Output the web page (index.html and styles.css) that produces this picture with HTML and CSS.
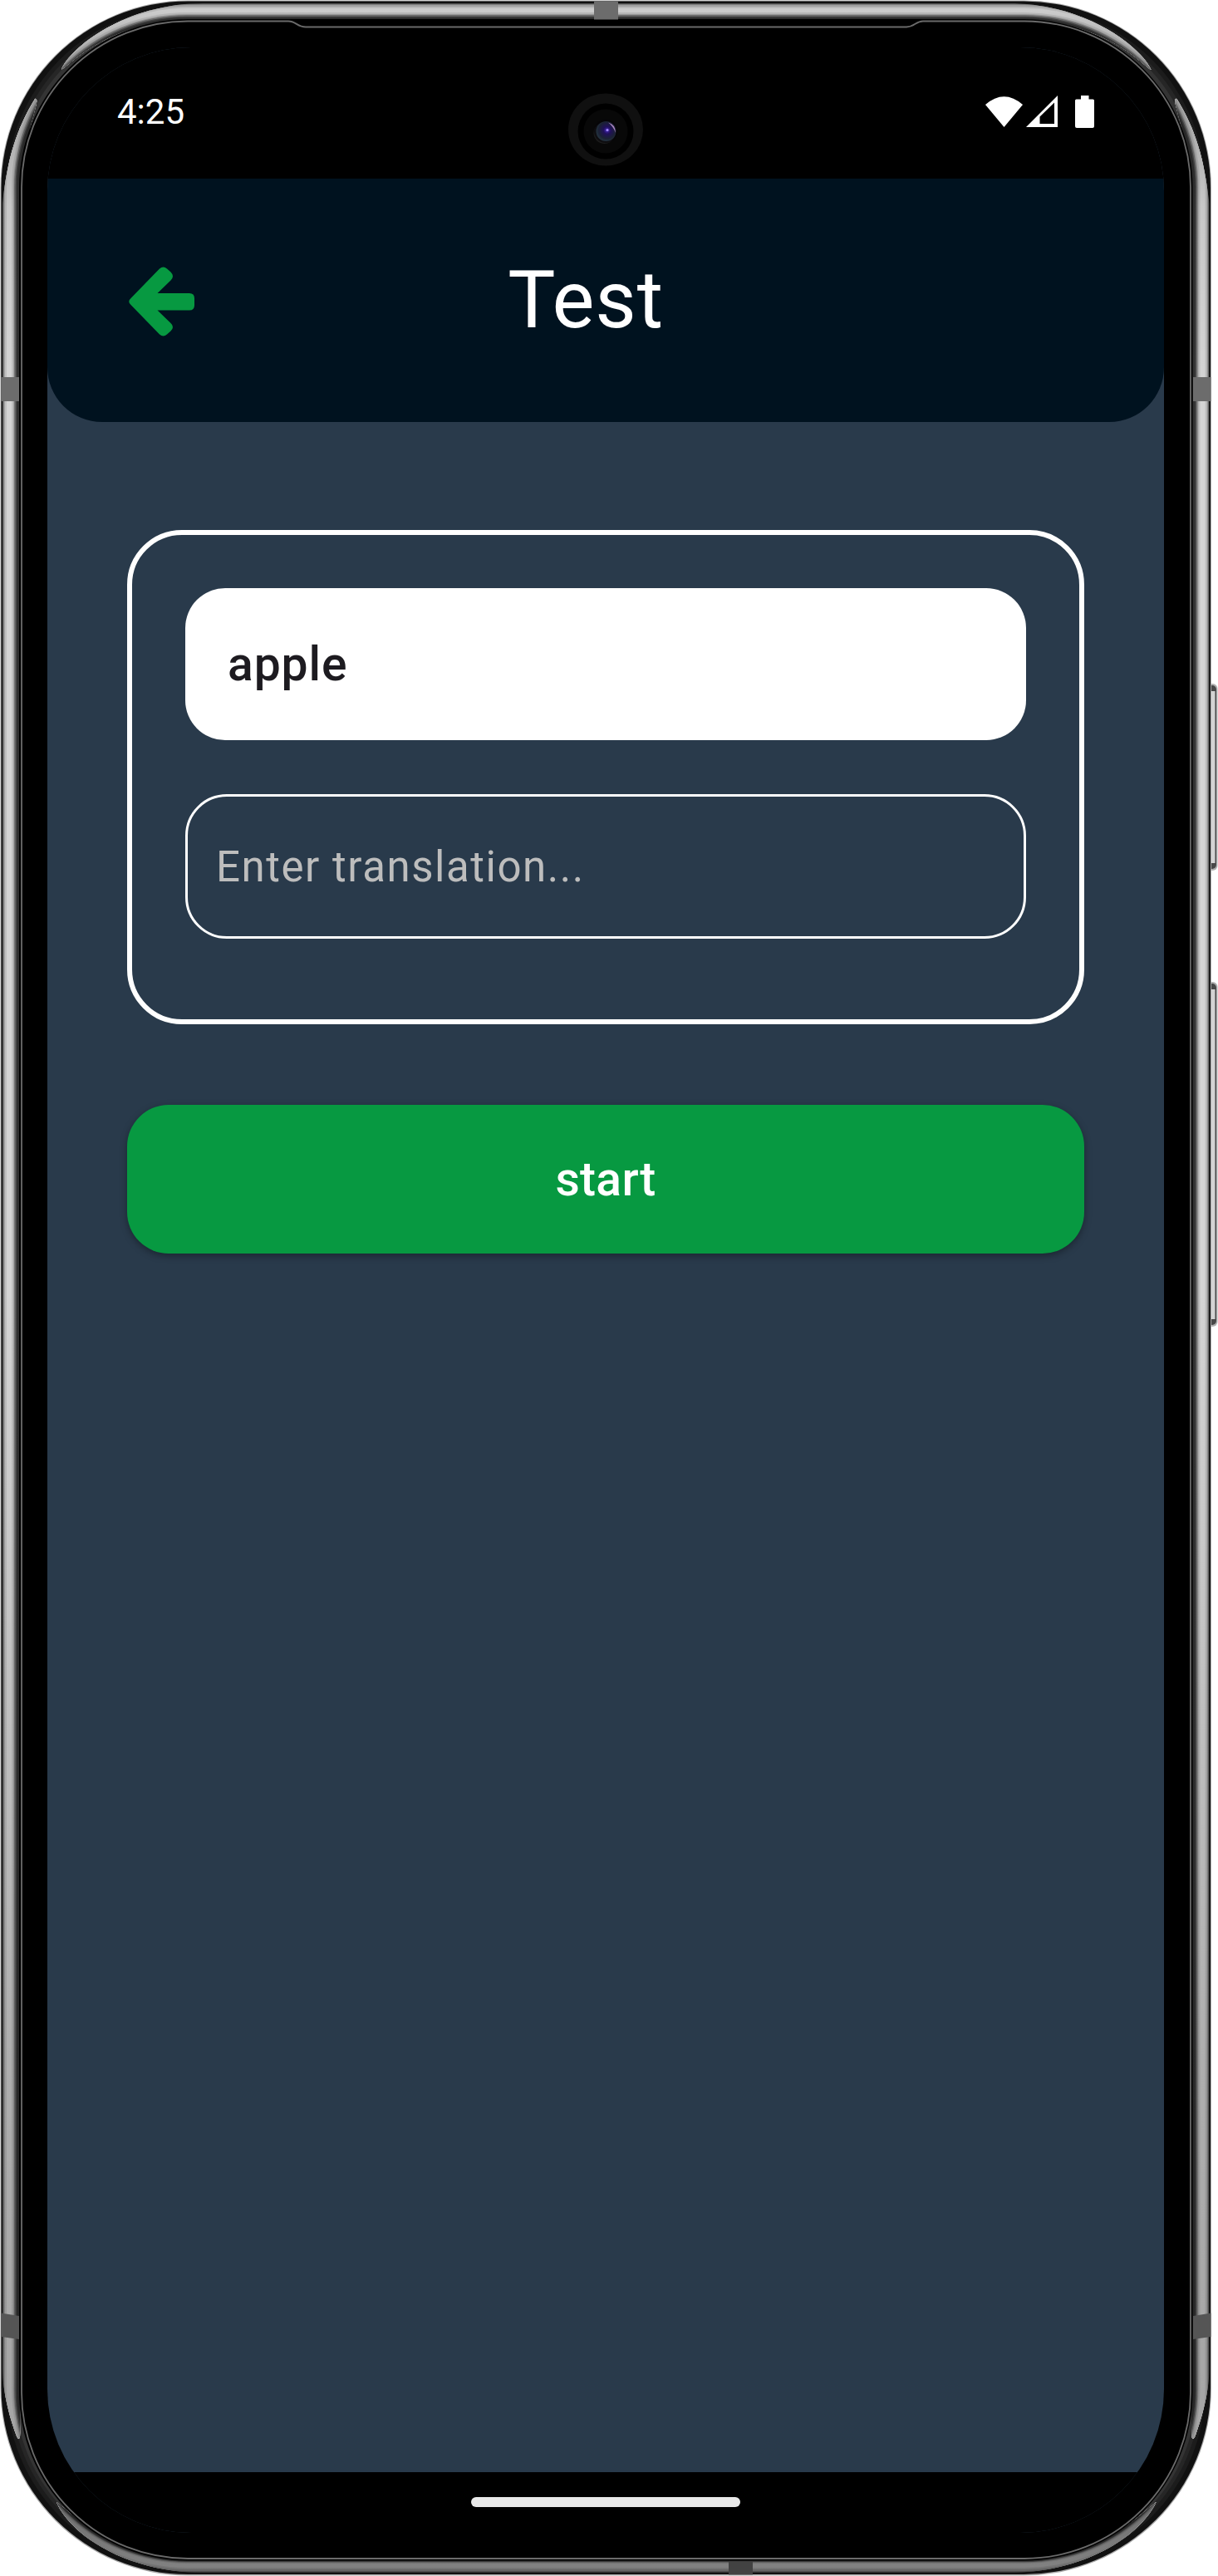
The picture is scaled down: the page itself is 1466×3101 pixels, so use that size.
FILE: index.html
```html
<!DOCTYPE html>
<html lang="en">
<head>
<meta charset="utf-8">
<title>Test</title>
<link rel="stylesheet" href="styles.css">
</head>
<body>
<div class="device">
  <svg class="bezel" viewBox="0 0 1466 3101" aria-hidden="true">
    <defs>
      <clipPath id="shine">
        <path id="side" d="M42 119Q45 118 44 124C40 142 25 185 24 250V2868C24 2885 25 2915 24 2934Q22 2939 19 2930C12 2910 3 2880 3 2850V245C9 190 20 155 42 119Z"/>
        <path d="M1416.500 119Q1413.500 118 1414.500 124C1418.500 142 1433.500 185 1434.500 250V2868C1434.500 2885 1433.500 2915 1434.500 2934Q1436.500 2939 1439.500 2930C1446.500 2910 1455.500 2880 1455.500 2850V245C1449.500 190 1438.500 155 1416.500 119Z"/>
        <path d="M74 84C84 58 150 4 245 4H1213.500C1308.500 4 1374.500 58 1385.500 84C1374.500 78 1330 23 1218.500 23H240C130 23 85 78 74 84Z"/>
        <path d="M68 3012C86 3024 130 3080 240 3080H1218.500C1328.500 3080 1374.500 3024 1391.500 3012C1374.500 3050 1308.500 3097 1213.500 3097H245C150 3097 84 3050 68 3012Z"/>
      </clipPath>
      <linearGradient id="shade" gradientUnits="userSpaceOnUse" x1="0" y1="0" x2="0" y2="3101">
        <stop offset="0" stop-opacity="0"/>
        <stop offset=".008" stop-opacity=".08"/>
        <stop offset=".03" stop-opacity=".27"/>
        <stop offset=".08" stop-opacity=".06"/>
        <stop offset=".15" stop-opacity="0"/>
        <stop offset=".5" stop-opacity="0"/>
        <stop offset=".8" stop-opacity=".18"/>
        <stop offset=".94" stop-opacity=".22"/>
        <stop offset=".97" stop-opacity=".48"/>
        <stop offset="1" stop-opacity=".38"/>
      </linearGradient>
      <radialGradient id="lens" cx=".55" cy=".45" r=".6">
        <stop offset="0" stop-color="#4a2cc0"/><stop offset=".3" stop-color="#20105a"/><stop offset=".7" stop-color="#1b2134"/><stop offset="1" stop-color="#263944"/>
      </radialGradient>
    </defs>
    <rect x="1450" y="823" width="15.500" height="225" rx="6" fill="#b0b0b0"/>
    <rect x="1450" y="1182" width="15.500" height="415" rx="6" fill="#b0b0b0"/>
    <rect x="1450" y="825" width="14" height="221" rx="5" fill="#484848"/>
    <rect x="1450" y="1184" width="14" height="411" rx="5" fill="#484848"/>
    <path d="M1456 832h6.500v207h-6.500zM1456 1191h6.500v397h-6.500z" fill="#d3d3d3"/>
    <rect x=".5" y=".5" width="1457.500" height="3100" rx="225.500" fill="#aaa"/>
    <rect x="1.500" y="1.500" width="1455.500" height="3097.500" rx="224.500" fill="#111"/>
    <rect x="8" y="8" width="1442.500" height="3085" rx="218" fill="#1c1c1c"/>
    <rect x="13" y="13" width="1432.500" height="3075" rx="213" fill="#262626"/>
    <rect x="18" y="18" width="1422.500" height="3066" rx="208" fill="#343434"/>
    <g clip-path="url(#shine)">
      <rect x="3" y="4" width="1452.500" height="3093" rx="222" fill="#555"/>
      <rect x="4" y="5" width="1450.500" height="3091" rx="221" fill="#808080"/>
      <rect x="5" y="6" width="1448.500" height="3089" rx="220" fill="#a4a4a4"/>
      <rect x="6" y="8" width="1446.500" height="3085" rx="219" fill="#c0c0c0"/>
      <rect x="8" y="10" width="1442.500" height="3081" rx="217" fill="#d4d4d4"/>
      <rect x="14" y="15" width="1430.500" height="3071" rx="211" fill="#c0c0c0"/>
      <rect x="16" y="17" width="1426.500" height="3068" rx="209" fill="#a0a0a0"/>
      <rect x="17" y="18" width="1424.500" height="3066" rx="208" fill="#777"/>
      <rect x="18.500" y="19.500" width="1421.500" height="3064" rx="206.500" fill="#4a4a4a"/>
      <rect x="20" y="21" width="1418.500" height="3061" rx="205" fill="#303030"/>
      <rect width="1466" height="3101" fill="url(#shade)"/>
    </g>
    <rect x="23" y="23" width="1412.500" height="3059.500" rx="203" fill="#000"/>
    <path d="M226 25.500H347C356 25.500 358 32.500 368 32.500H1091C1101 32.500 1102 25.500 1111 25.500H1233A200 200 0 0 1 1433 225.500V2880A200 200 0 0 1 1233 3080H226A200 200 0 0 1 26 2880V225.500A200 200 0 0 1 226 25.500Z" fill="none" stroke="#6a6a6a" stroke-width="1.800"/>
    <g fill="#6c6c6c">
      <path d="M1.500 454H23v29H1.500zM1436 454h21.500v29H1436zM715 1.500h29V23.500h-29z"/>
      <path d="M1.500 2784.500L23 2788v28L1.500 2813zM1457.500 2784.500L1436 2788v28l21.500-3z" fill="#555"/>
      <path d="M877 3084h29v15.500h-29z" fill="#424242"/>
    </g>
  </svg>

  <div class="screen">
    <div class="status-bar">
      <span class="clock">4:25</span>
      <div class="status-icons">
        <svg class="wifi" viewBox="0 0 45 37"><path d="M0 10Q22.500-9.500 45 10L22.500 37Z"/></svg>
        <svg class="signal" viewBox="0 0 38 38"><path d="M38 0V38H0ZM34 8.500L16.500 25.500V34H34Z" fill-rule="evenodd"/></svg>
        <svg class="battery" viewBox="0 0 23 39"><path d="M7 0h9.500v4.500H21.500Q23 4.500 23 6V37Q23 39 21 39H2Q0 39 0 37V6Q0 4.500 1.500 4.500H7Z"/></svg>
      </div>
      <svg class="camera" viewBox="0 0 92 92" aria-hidden="true">
        <ellipse cx="46" cy="44" rx="45" ry="43.500" fill="#101010"/>
        <circle cx="46" cy="46" r="33.500" fill="#000"/>
        <circle cx="46" cy="46" r="26.500" fill="#080808"/>
        <circle cx="44.500" cy="48" r="13" fill="#1c1c1c"/>
        <circle cx="46" cy="46" r="14" fill="#050308" opacity=".6"/>
        <circle cx="46.500" cy="46" r="12" fill="url(#lens)"/>
        <path d="M49 35.500Q58 38 58 48Q55 40 49 35.500Z" fill="#a883bd"/>
        <circle cx="48" cy="44.500" r="1.500" fill="#a48cff"/>
      </svg>
    </div>

    <header class="app-header">
      <button class="back" aria-label="Back">
        <svg viewBox="0 0 79 84"><path d="M2.500 38L37 2.500Q41.500-1.500 46 2.500L50.500 6.500Q55.500 11.500 50.500 16.500L34.500 32H73Q79 32 79 38V46.500Q79 52.500 73 52.500H34.500L50.500 68Q55.500 72.500 50.500 77.500L46 81.500Q41.500 85.500 37 81.500L2.500 46Q-2 42 2.500 38Z"/></svg>
      </button>
      <h1>Test</h1>
    </header>

    <main class="content">
      <section class="card">
        <div class="word">apple</div>
        <input class="answer" type="text" placeholder="Enter translation...">
      </section>
      <button class="start">start</button>
    </main>

    <div class="nav-bar"><div class="handle"></div></div>
  </div>
</div>
</body>
</html>
```
FILE: styles.css
```css
* {
  box-sizing: border-box;
}

body {
  margin: 0;
  background: #fff;
  font-family: Roboto, sans-serif;
}

button {
  border: 0;
  padding: 0;
  font-family: inherit;
}

.device {
  position: relative;
  width: 1466px;
  height: 3101px;
  padding: 57px 65px 52px 57px;
  overflow: hidden;
}

.bezel {
  position: absolute;
  inset: 0;
  width: 1466px;
  height: 3101px;
}

.screen {
  position: relative;
  display: flex;
  flex-direction: column;
  width: 1344px;
  height: 2992px;
  overflow: hidden;
  border-radius: 173px;
  background: #293a4b;
}

.status-bar {
  position: relative;
  display: flex;
  flex: none;
  justify-content: space-between;
  height: 158px;
  padding: 53px 84px 0;
  background: #000;
}

.clock {
  height: 50px;
  color: #fff;
  font-size: 42px;
  line-height: 50px;
}

.status-icons {
  display: flex;
  align-items: flex-start;
  padding-top: 5px;
  fill: #fff;
}

.wifi {
  width: 45px;
  height: 37px;
  margin: 1px 4px 0 0;
}

.signal {
  width: 38px;
  height: 38px;
  margin-right: 21px;
}

.battery {
  width: 23px;
  height: 39px;
}

.camera {
  position: absolute;
  top: 55px;
  left: 626px;
  width: 92px;
  height: 92px;
}

.app-header {
  display: grid;
  grid-template-columns: 79px 1fr 79px;
  align-items: center;
  flex: none;
  height: 293px;
  padding: 2px 98px 0;
  border-radius: 0 0 66px 66px;
  background: #00121f;
}

.back {
  width: 79px;
  height: 84px;
  background: none;
}

.back svg {
  display: block;
  fill: #079941;
}

.app-header h1 {
  margin: 0;
  padding: 0 48px 4px 0;
  color: #fff;
  font-size: 96px;
  font-weight: 400;
  letter-spacing: .8px;
  line-height: 112px;
  text-align: center;
}

.content {
  display: flex;
  flex: 1;
  flex-direction: column;
  gap: 97px;
  padding: 130px 96px 0;
}

.card {
  display: flex;
  flex-direction: column;
  gap: 65px;
  height: 595px;
  padding: 64px;
  border: 6px solid #fff;
  border-radius: 66px;
}

.word {
  height: 183px;
  padding: 0 51px;
  border-radius: 48px;
  background: #fff;
  color: #1d1b20;
  font-size: 57px;
  font-weight: 500;
  letter-spacing: .9px;
  line-height: 183px;
}

.answer {
  width: 100%;
  height: 174px;
  padding: 0 34px;
  border: 3px solid #fff;
  border-radius: 50px;
  outline: 0;
  background: none;
  color: #fff;
  font-family: inherit;
  font-size: 51px;
  letter-spacing: 1.55px;
}

.answer::placeholder {
  color: #bdbdbd;
  opacity: 1;
}

.start {
  height: 179px;
  border-radius: 50px;
  background: #079941;
  box-shadow: 0 3px 9px rgba(0, 0, 0, .35);
  color: #fff;
  font-size: 57px;
  font-weight: 500;
  letter-spacing: .3px;
}

.nav-bar {
  display: flex;
  flex: none;
  justify-content: center;
  height: 73px;
  padding-top: 30px;
  background: #000;
}

.handle {
  width: 324px;
  height: 12px;
  border-radius: 6px;
  background: #e9e9e9;
}
```
